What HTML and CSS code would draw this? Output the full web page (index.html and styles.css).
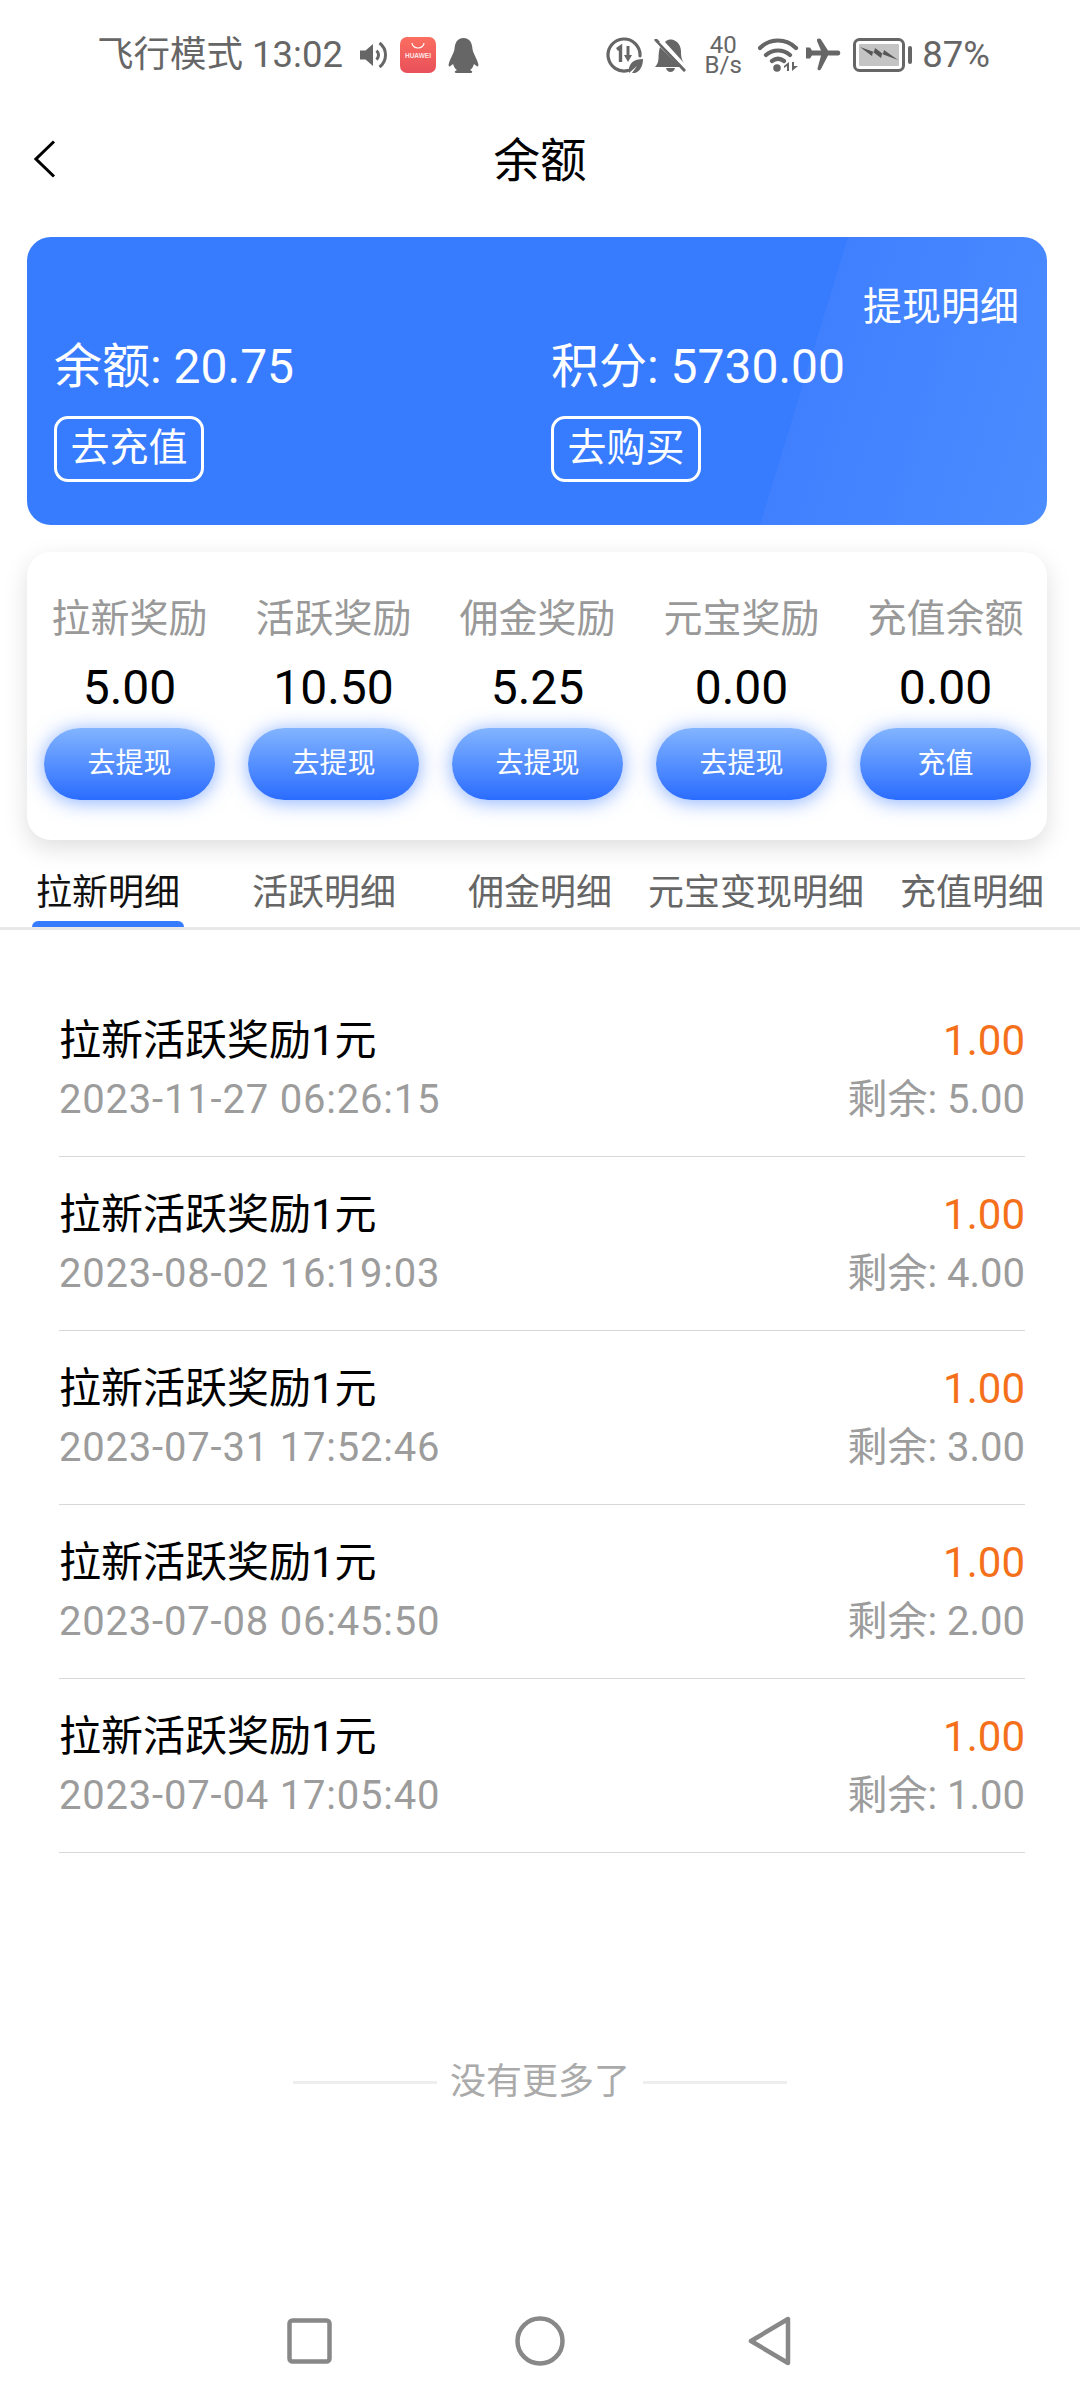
FILE: index.html
```html
<!DOCTYPE html>
<html lang="zh-CN">
<head>
<meta charset="utf-8">
<title>余额</title>
<link rel="stylesheet" href="styles.css">
</head>
<body>
<div class="page">
  <div class="status">
    <div class="status-left">
      <span class="status-text">飞行模式 13:02</span>
      <svg class="ic-speaker" width="28" height="28" viewBox="0 0 28 28"><path d="M0 9.500h5.500L13 3v22l-7.500-6.500H0z" fill="#666"/><path d="M16.500 9.500a6 6 0 0 1 0 9M19.500 2a15 15 0 0 1 0 24" fill="none" stroke="#666" stroke-width="3"/></svg>
      <span class="hw-icon"><svg width="16" height="7" viewBox="0 0 16 7"><path d="M2 1a6 5 0 0 0 12 0" fill="none" stroke="#fff" stroke-width="1.200"/></svg><span class="hw-text">HUAWEI</span></span>
      <svg class="ic-qq" width="31" height="35" viewBox="0 0 31 35"><path d="M15.500 0C9 0 7 5 6.500 11 6 15 3 19 1 25c-1 3 0 4 1.500 3L5 26c1 3 2 5 4 6-3 1-3 3 0 3h13c3 0 3-2 0-3 2-1 3-3 4-6l2.500 2c1.500 1 2.500 0 1.500-3-2-6-5-10-5.500-14C24 5 22 0 15.500 0z" fill="#666"/></svg>
    </div>
    <div class="status-right">
      <svg class="ic-saver" width="37" height="36" viewBox="0 0 37 36"><path d="M22 33.500A16 16 0 1 1 34 19" fill="none" stroke="#666" stroke-width="3.200" stroke-linecap="round"/><path d="M11 12.500l3.500-2.500V25" fill="none" stroke="#666" stroke-width="3.400"/><path d="M22 9v12" stroke="#666" stroke-width="3"/><path d="M18 18h8l-4 7z" fill="#666"/><path d="M23 36c-1-9 4-14 14-14 0 9-5 15-11 14l5-7-8 7z" fill="#666"/></svg>
      <svg class="ic-bell" width="32" height="33" viewBox="0 0 32 33"><path d="M6 8l20 20H1c2-2 3.500-5 3.500-9 0-4 .5-8 1.500-11zM11 3c1.500-1.500 3-2.500 5-2.500h2C24 2 27 7 27 13c0 4 .5 8 3 11z" fill="#666"/><path d="M12 29h9c-.5 2.500-2.500 4-4.500 4s-4-1.500-4.500-4z" fill="#666"/><path d="M2 1l28 30" stroke="#666" stroke-width="3.200" stroke-linecap="round"/><path d="M6 2.500L31 28" stroke="#fff" stroke-width="2"/></svg>
      <span class="speed"><span class="speed-num">40</span><span class="speed-unit">B/s</span></span>
      <svg class="ic-wifi" width="41" height="34" viewBox="0 0 41 34"><path d="M2 10C12 0 28 0 38 10M8 17c7-6 17-6 24 0M14 23c4-3 8-3 12 0" fill="none" stroke="#666" stroke-width="4.200" stroke-linecap="round"/><circle cx="19" cy="30" r="3.800" fill="#666"/><path d="M31 24v9h-2v-5l-3 2v-2zM34 24h2v4h4l-6 5z" fill="#666"/></svg>
      <svg class="ic-plane" width="35" height="34" viewBox="0 0 35 34"><path d="M11 1.500c.8-1.500 3-1.500 4 0L22 12.500h10c3 0 3 5 0 5H22l-7 13.500c-1 2-3.500 1.500-3.500-.5L15 17.500H6L4 20.500H0V9.500h4L6 12.500h9L11 3z" fill="#666"/></svg>
      <svg class="ic-batt" width="59" height="34" viewBox="0 0 59 34"><rect x="1.500" y="1.500" width="49" height="31" rx="5" fill="none" stroke="#666" stroke-width="3"/><rect x="6" y="6" width="40" height="22" rx="1" fill="#c4c4c4"/><path d="M7 9l14 5 1-4 8 6 1-4 14 10-16-6-1 4-8-6-1 4z" fill="#555"/><rect x="55" y="8" width="4" height="18" rx="2" fill="#666"/></svg>
      <span class="status-text batt-text">87%</span>
    </div>
  </div>

  <header class="nav">
    <svg class="back" width="22" height="38" viewBox="0 0 22 38"><path d="M20 1.500L2 19l18 17.500" fill="none" stroke="#000" stroke-width="3"/></svg>
    <h1 class="title">余额</h1>
  </header>

  <section class="balance">
    <div class="balance-link">提现明细</div>
    <div class="balance-cols">
      <div class="balance-col">
        <div class="balance-val">余额: 20.75</div>
        <span class="outline-btn">去充值</span>
      </div>
      <div class="balance-col">
        <div class="balance-val">积分: 5730.00</div>
        <span class="outline-btn">去购买</span>
      </div>
    </div>
  </section>

  <section class="rewards">
    <div class="reward"><div class="reward-label">拉新奖励</div><div class="reward-val">5.00</div><div class="pill">去提现</div></div>
    <div class="reward"><div class="reward-label">活跃奖励</div><div class="reward-val">10.50</div><div class="pill">去提现</div></div>
    <div class="reward"><div class="reward-label">佣金奖励</div><div class="reward-val">5.25</div><div class="pill">去提现</div></div>
    <div class="reward"><div class="reward-label">元宝奖励</div><div class="reward-val">0.00</div><div class="pill">去提现</div></div>
    <div class="reward"><div class="reward-label">充值余额</div><div class="reward-val">0.00</div><div class="pill">充值</div></div>
  </section>

  <nav class="tabs">
    <div class="tab tab-active">拉新明细</div>
    <div class="tab">活跃明细</div>
    <div class="tab">佣金明细</div>
    <div class="tab">元宝变现明细</div>
    <div class="tab">充值明细</div>
  </nav>

  <main class="list">
    <div class="row"><div><div class="row-title">拉新活跃奖励1元</div><div class="row-sub row-date">2023-11-27 06:26:15</div></div><div class="row-end"><div class="row-amt">1.00</div><div class="row-sub">剩余: 5.00</div></div></div>
    <div class="row"><div><div class="row-title">拉新活跃奖励1元</div><div class="row-sub row-date">2023-08-02 16:19:03</div></div><div class="row-end"><div class="row-amt">1.00</div><div class="row-sub">剩余: 4.00</div></div></div>
    <div class="row"><div><div class="row-title">拉新活跃奖励1元</div><div class="row-sub row-date">2023-07-31 17:52:46</div></div><div class="row-end"><div class="row-amt">1.00</div><div class="row-sub">剩余: 3.00</div></div></div>
    <div class="row"><div><div class="row-title">拉新活跃奖励1元</div><div class="row-sub row-date">2023-07-08 06:45:50</div></div><div class="row-end"><div class="row-amt">1.00</div><div class="row-sub">剩余: 2.00</div></div></div>
    <div class="row"><div><div class="row-title">拉新活跃奖励1元</div><div class="row-sub row-date">2023-07-04 17:05:40</div></div><div class="row-end"><div class="row-amt">1.00</div><div class="row-sub">剩余: 1.00</div></div></div>
  </main>

  <div class="nomore"><span class="nomore-line"></span><span class="nomore-text">没有更多了</span><span class="nomore-line"></span></div>

  <div class="sysnav">
    <svg width="45" height="46" viewBox="0 0 45 46"><rect x="2.500" y="2.500" width="40" height="41" rx="3" fill="none" stroke="#888" stroke-width="4.500"/></svg>
    <svg width="50" height="50" viewBox="0 0 50 50"><circle cx="25" cy="25" r="22.500" fill="none" stroke="#888" stroke-width="4.500"/></svg>
    <svg width="44" height="50" viewBox="0 0 44 50"><path d="M40 3v44L3 25z" fill="none" stroke="#888" stroke-width="4.500" stroke-linejoin="round"/></svg>
  </div>
</div>
</body>
</html>
```

FILE: styles.css
```css
* { box-sizing: border-box; }
html, body { margin: 0; padding: 0; background: #fff; }
body { font-family: Roboto, "Noto Sans CJK SC", sans-serif; color: #000; }
.page { width: 1080px; height: 2400px; display: flex; flex-direction: column; overflow: hidden; }

/* status bar */
.status { height: 110px; display: flex; align-items: center; justify-content: space-between; padding: 0 90px 0 97px; }
.status-left, .status-right { display: flex; align-items: center; }
.status-text { font-size: 36.500px; line-height: 44px; color: #666; white-space: nowrap; }
.ic-speaker { margin-left: 17px; }
.hw-icon { width: 36px; height: 36px; margin-left: 12px; border-radius: 7px; background: linear-gradient(#fb6e60, #e8505a); display: flex; flex-direction: column; align-items: center; padding-top: 5px; }
.hw-text { font-family: "Liberation Sans", sans-serif; font-size: 6.500px; line-height: 10px; font-weight: 700; color: #ffe4e2; margin-top: 2px; white-space: nowrap; }
.ic-qq { margin-left: 12px; }
.ic-bell { margin-left: 11px; }
.speed { width: 36px; margin-left: 19px; display: flex; flex-direction: column; align-items: center; color: #666; font-size: 24px; line-height: 20px; }
.ic-wifi { margin-left: 17px; }
.ic-plane { margin-left: 7px; }
.ic-batt { margin-left: 12px; }
.batt-text { margin-left: 10px; }

/* header */
.nav { height: 102px; display: flex; align-items: center; position: relative; justify-content: center; }
.back { position: absolute; left: 34px; top: 30px; }
.title { margin: 0; font-size: 46.500px; line-height: 60px; font-weight: 400; }

/* balance card */
.balance { margin: 25px 33px 0 27px; height: 288px; border-radius: 24px; padding: 48px 28px 0 27px; color: #fff; background: linear-gradient(107deg, #377bff 74.1%, #4080ff 74.1%, #4b8cff 100%); }
.balance-link { font-size: 39px; line-height: 44px; text-align: right; }
.balance-cols { display: grid; grid-template-columns: 497px 1fr; margin-top: 10px; }
.balance-val { font-size: 48px; line-height: 56px; white-space: nowrap; }
.outline-btn { display: inline-block; margin-top: 21px; height: 66px; width: 150px; border: 3px solid #fff; border-radius: 14px; font-size: 39px; line-height: 58px; text-align: center; }

/* rewards */
.rewards { margin: 27px 33px 0 27px; height: 288px; border-radius: 24px; background: #fff; box-shadow: 0 8px 24px rgba(0, 0, 0, .13); padding: 45px 16px 0 17px; display: grid; grid-template-columns: repeat(5, 171px); column-gap: 33px; }
.reward { display: flex; flex-direction: column; align-items: center; }
.reward-label { font-size: 39px; line-height: 44px; color: #999; white-space: nowrap; }
.reward-val { font-size: 48px; line-height: 52px; margin-top: 21px; }
.pill { margin-top: 14px; width: 171px; height: 72px; border-radius: 36px; background: linear-gradient(#82b4ff, #2a6cff); box-shadow: 0 2px 20px rgba(56, 122, 255, .6); color: #fff; font-size: 28px; line-height: 72px; text-align: center; }

/* tabs */
.tabs { margin-top: 19px; height: 71px; display: grid; grid-template-columns: repeat(5, 216px); border-bottom: 3px solid #e8e8e8; }
.tab { position: relative; font-size: 36px; line-height: 68px; color: #666; text-align: center; white-space: nowrap; }
.tab-active { color: #111; }
.tab-active::after { content: ""; position: absolute; left: 32px; bottom: 0; width: 152px; height: 6px; border-radius: 6px 6px 0 0; background: #377bff; }

/* list */
.list { margin: 53px 55px 0 59px; }
.row { height: 174px; padding-top: 33px; display: flex; justify-content: space-between; border-bottom: 1px solid #d8d8d8; }
.row-end { text-align: right; }
.row-title { font-size: 42px; line-height: 50px; white-space: nowrap; }
.row-amt { font-size: 42px; line-height: 50px; color: #f5701a; }
.row-sub { margin-top: 12px; font-size: 40px; line-height: 44px; color: #9c9c9c; white-space: nowrap; }
.row-date { letter-spacing: .8px; }

/* footer */
.nomore { margin-top: 204px; display: flex; align-items: center; justify-content: center; gap: 13px; }
.nomore-line { width: 144px; height: 3px; background: #eee; }
.nomore-text { font-size: 36px; line-height: 50px; color: #aaa; }

/* system nav */
.sysnav { margin-top: auto; height: 84px; padding: 0 288px 35px 287px; display: flex; justify-content: space-between; align-items: center; }
```
